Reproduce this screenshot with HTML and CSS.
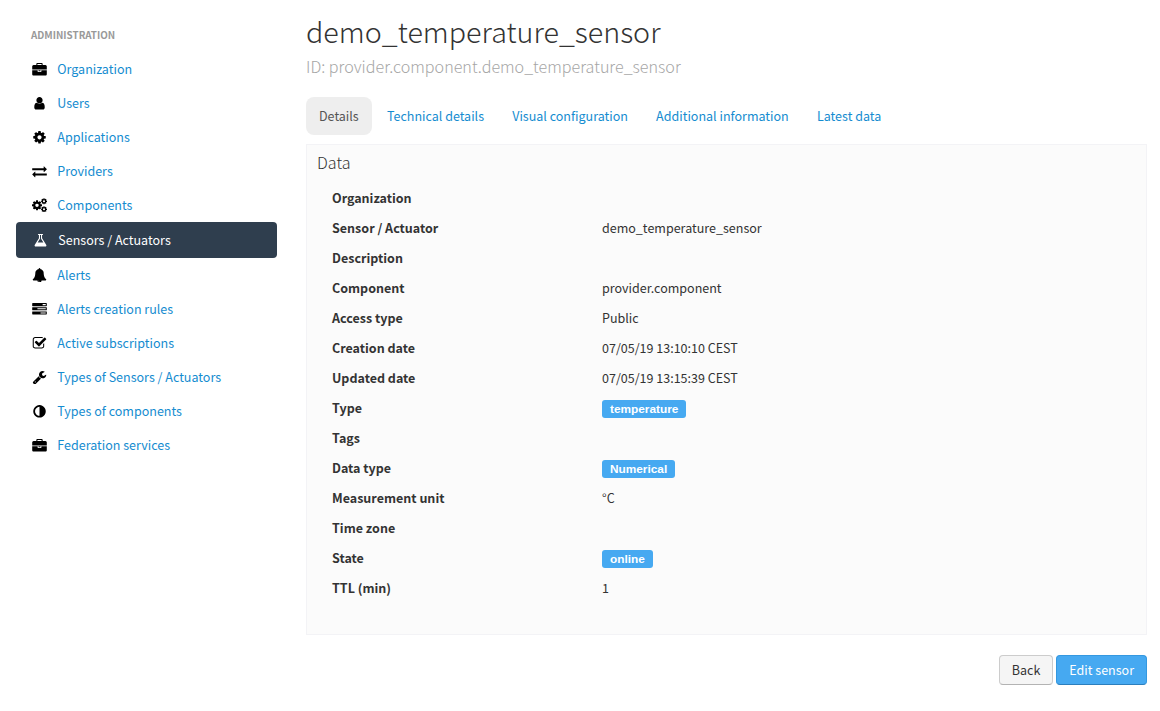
FILE: index.html
```html
<!DOCTYPE html>
<html lang="en">
<head>
<meta charset="utf-8">
<title>demo_temperature_sensor</title>
<link rel="stylesheet" href="styles.css">
</head>
<body>
<svg class="sprite" aria-hidden="true">
  <symbol id="briefcase" viewBox="0 0 1792 1792"><path d="M640 256h512v-128h-512v128zm1152 640v480q0 66-47 113t-113 47h-1472q-66 0-113-47t-47-113v-480h672v160q0 26 19 45t45 19h320q26 0 45-19t19-45v-160h672zm-768 0v128h-256v-128h256zm768-480v384h-1792v-384q0-66 47-113t113-47h352v-160q0-40 28-68t68-28h576q40 0 68 28t28 68v160h352q66 0 113 47t47 113z"/></symbol>
  <symbol id="user" viewBox="0 0 1792 1792"><path d="M1536 1399q0 109-62.500 187t-150.500 78h-854q-88 0-150.500-78t-62.500-187q0-85 8.500-160.500t31.500-152 58.500-131 94-89 134.500-34.500q131 128 313 128t313-128q76 0 134.500 34.500t94 89 58.500 131 31.500 152 8.500 160.500zm-256-887q0 159-112.500 271.500t-271.500 112.500-271.500-112.500-112.500-271.500 112.500-271.500 271.500-112.500 271.500 112.500 112.500 271.500z"/></symbol>
  <symbol id="cog" viewBox="0 0 1792 1792"><path id="gear" d="M1152 896q0-106-75-181t-181-75-181 75-75 181 75 181 181 75 181-75 75-181zm512-109v222q0 12-8 23t-20 13l-185 28q-19 54-39 91 35 50 107 138 10 12 10 25t-9 23q-27 37-99 108t-94 71q-12 0-26-9l-138-108q-44 23-91 38-16 136-29 186-7 28-36 28h-222q-14 0-24.500-8.500t-11.500-21.500l-28-184q-49-16-90-37l-141 107q-10 9-25 9-14 0-25-11-126-114-165-168-7-10-7-23 0-12 8-23 15-21 51-66.500t54-70.500q-27-50-41-99l-183-27q-13-2-21-12.500t-8-23.500v-222q0-12 8-23t19-13l186-28q14-46 39-92-40-57-107-138-10-12-10-24 0-10 9-23 26-36 98.500-107.500t94.500-71.500q13 0 26 10l138 107q44-23 91-38 16-136 29-186 7-28 36-28h222q14 0 24.500 8.500t11.500 21.500l28 184q49 16 90 37l142-107q9-9 24-9 13 0 25 10 129 119 165 170 7 8 7 22 0 12-8 23-15 21-51 66.500t-54 70.500q26 50 41 98l183 28q13 2 21 12.500t8 23.500z"/></symbol>
  <symbol id="exchange" viewBox="0 0 1792 1792"><path d="M1792 1184v192q0 13-9.500 22.500t-22.500 9.500h-1376v192q0 13-9.500 22.500t-22.500 9.500q-12 0-24-10l-319-320q-9-9-9-22 0-14 9-23l320-320q9-9 23-9 13 0 22.500 9.500t9.500 22.500v192h1376q13 0 22.500 9.500t9.500 22.500zm0-544q0 14-9 23l-320 320q-9 9-23 9-13 0-22.500-9.500t-9.500-22.500v-192h-1376q-13 0-22.500-9.500t-9.500-22.500v-192q0-13 9.500-22.500t22.500-9.500h1376v-192q0-14 9-23t23-9q12 0 24 10l319 319q9 9 9 23z"/></symbol>
  <symbol id="cogs" viewBox="0 0 1920 1792"><use href="#gear" transform="translate(-106.700 149.300) scale(.8333)"/><use href="#gear" transform="translate(1088 -64) scale(.5)"/><use href="#gear" transform="translate(1088 960) scale(.5)"/></symbol>
  <symbol id="flask" viewBox="0 0 1792 1792"><path d="M1591 1448q56 89 21.500 152.500t-140.500 63.500h-1152q-106 0-140.500-63.500t21.500-152.500l503-793v-399h-64q-26 0-45-19t-19-45 19-45 45-19h512q26 0 45 19t19 45-19 45-45 19h-64v399zm-779-725l-272 429h712l-272-429-20-31v-436h-128v436z"/></symbol>
  <symbol id="bell" viewBox="0 0 1792 1792"><path d="M912 1696q0-16-16-16-59 0-101.500-42.500t-42.500-101.500q0-16-16-16t-16 16q0 73 51.500 124.500t124.500 51.500q16 0 16-16zm816-288q0 52-38 90t-90 38h-448q0 106-75 181t-181 75-181-75-75-181h-448q-52 0-90-38t-38-90q50-42 91-88t85-119.500 74.500-158.500 50-206 19.500-260q0-152 117-282.500t307-158.500q-8-19-8-39 0-40 28-68t68-28 68 28 28 68q0 20-8 39 190 28 307 158.500t117 282.500q0 139 19.500 260t50 206 74.500 158.500 85 119.500 91 88z"/></symbol>
  <symbol id="tasks" viewBox="0 0 1792 1792"><path d="M1024 1408h640v-128h-640v128zm-384-512h1024v-128h-1024v128zm640-512h384v-128h-384v128zm512 832v256q0 26-19 45t-45 19h-1664q-26 0-45-19t-19-45v-256q0-26 19-45t45-19h1664q26 0 45 19t19 45zm0-512v256q0 26-19 45t-45 19h-1664q-26 0-45-19t-19-45v-256q0-26 19-45t45-19h1664q26 0 45 19t19 45zm0-512v256q0 26-19 45t-45 19h-1664q-26 0-45-19t-19-45v-256q0-26 19-45t45-19h1664q26 0 45 19t19 45z"/></symbol>
  <symbol id="check" viewBox="0 0 1792 1792"><path d="M1472 930v318q0 119-84.500 203.500t-203.500 84.500h-832q-119 0-203.500-84.500t-84.500-203.500v-832q0-119 84.500-203.500t203.500-84.500h832q63 0 117 25 15 7 18 23 3 17-9 29l-49 49q-10 10-23 10-3 0-9-2-23-6-45-6h-832q-66 0-113 47t-47 113v832q0 66 47 113t113 47h832q66 0 113-47t47-113v-254q0-13 9-22l64-64q10-10 23-10 6 0 12 3 20 8 20 29zm231-489l-814 814q-24 24-57 24t-57-24l-430-430q-24-24-24-57t24-57l110-110q24-24 57-24t57 24l263 263 647-647q24-24 57-24t57 24l110 110q24 24 24 57t-24 57z"/></symbol>
  <symbol id="wrench" viewBox="0 0 1792 1792"><path d="M448 1472q0-26-19-45t-45-19-45 19-19 45 19 45 45 19 45-19 19-45zm644-420l-682 682q-37 37-90 37-52 0-91-37l-106-108q-38-36-38-90 0-53 38-91l681-681q39 98 114.500 173.500t173.500 114.500zm634-435q0 39-23 106-47 134-164.500 217.500t-258.500 83.500q-185 0-316.500-131.500t-131.500-316.500 131.500-316.500 316.500-131.500q58 0 121.500 16.500t107.500 46.500q16 11 16 28t-16 28l-293 169v224l193 107q5-3 79-48.500t135.500-81 70.500-35.500q15 0 23.500 10t8.500 25z"/></symbol>
  <symbol id="adjust" viewBox="0 0 1792 1792"><path d="M896 1440v-1088q-148 0-273 73t-198 198-73 273 73 273 198 198 273 73zm768-544q0 209-103 385.500t-279.500 279.500-385.500 103-385.500-103-279.500-279.500-103-385.500 103-385.500 279.500-279.500 385.500-103 385.500 103 279.500 279.500 103 385.500z"/></symbol>
</svg>
<div class="page">
  <nav class="sidebar">
    <div class="nav-header">ADMINISTRATION</div>
    <a class="nav-item"><svg class="icon low"><use href="#briefcase"/></svg><span>Organization</span></a>
    <a class="nav-item"><svg class="icon"><use href="#user"/></svg><span>Users</span></a>
    <a class="nav-item"><svg class="icon"><use href="#cog"/></svg><span>Applications</span></a>
    <a class="nav-item"><svg class="icon"><use href="#exchange"/></svg><span>Providers</span></a>
    <a class="nav-item"><svg class="icon"><use href="#cogs"/></svg><span>Components</span></a>
    <a class="nav-item active"><svg class="icon"><use href="#flask"/></svg><span>Sensors / Actuators</span></a>
    <a class="nav-item"><svg class="icon"><use href="#bell"/></svg><span>Alerts</span></a>
    <a class="nav-item"><svg class="icon"><use href="#tasks"/></svg><span>Alerts creation rules</span></a>
    <a class="nav-item"><svg class="icon"><use href="#check"/></svg><span>Active subscriptions</span></a>
    <a class="nav-item"><svg class="icon"><use href="#wrench"/></svg><span>Types of Sensors / Actuators</span></a>
    <a class="nav-item"><svg class="icon"><use href="#adjust"/></svg><span>Types of components</span></a>
    <a class="nav-item"><svg class="icon low"><use href="#briefcase"/></svg><span>Federation services</span></a>
  </nav>
  <main class="content">
    <h1 class="title">demo_temperature_sensor</h1>
    <div class="subtitle">ID: provider.component.demo_temperature_sensor</div>
    <div class="tabs">
      <a class="tab selected">Details</a>
      <a class="tab">Technical details</a>
      <a class="tab">Visual configuration</a>
      <a class="tab">Additional information</a>
      <a class="tab">Latest data</a>
    </div>
    <section class="panel">
      <h2 class="panel-title">Data</h2>
      <dl class="fields">
        <dt>Organization</dt><dd></dd>
        <dt>Sensor / Actuator</dt><dd>demo_temperature_sensor</dd>
        <dt>Description</dt><dd></dd>
        <dt>Component</dt><dd>provider.component</dd>
        <dt>Access type</dt><dd>Public</dd>
        <dt>Creation date</dt><dd>07/05/19 13:10:10 CEST</dd>
        <dt>Updated date</dt><dd>07/05/19 13:15:39 CEST</dd>
        <dt>Type</dt><dd><span class="badge">temperature</span></dd>
        <dt>Tags</dt><dd></dd>
        <dt>Data type</dt><dd><span class="badge">Numerical</span></dd>
        <dt>Measurement unit</dt><dd>°C</dd>
        <dt>Time zone</dt><dd></dd>
        <dt>State</dt><dd><span class="badge">online</span></dd>
        <dt>TTL (min)</dt><dd>1</dd>
      </dl>
    </section>
    <div class="actions">
      <button class="btn">Back</button>
      <button class="btn primary">Edit sensor</button>
    </div>
  </main>
</div>
</body>
</html>
```
FILE: styles.css
```css
* { box-sizing: border-box; }
body {
  margin: 0;
  background: #fff;
  color: #333;
  font-family: "Noto Sans CJK JP", "Noto Sans", sans-serif;
  font-size: 12.52px;
  line-height: 20px;
}
.sprite { display: none; }
.page { display: flex; height: 711px; }
.sidebar { width: 277px; padding: 25px 0 0 16px; }
.nav-header {
  height: 27px;
  padding-left: 15px;
  color: #999;
  font-size: 9.85px;
  font-weight: 700;
}
.nav-item {
  display: flex;
  align-items: center;
  gap: 9.9px;
  height: 34px;
  padding-left: 16.4px;
  color: #158cd0;
  white-space: nowrap;
}
.icon { width: 15px; height: 14.6px; fill: #000; }
.icon.low { margin-top: 2px; }
.nav-item.active {
  height: 36px;
  padding-left: 17.4px;
  border-radius: 4px;
  background: #2f3e4e;
  color: #fff;
}
.active .icon { fill: #fff; }
.content { width: 841px; margin-left: 29px; padding-top: 11px; }
.title { margin: 0; font-size: 28.7px; font-weight: 300; line-height: 40px; white-space: nowrap; }
.subtitle { margin-top: 5px; color: #a6a6a6; font-size: 16.13px; font-weight: 300; }
.tabs { display: flex; gap: 2.2px; margin-top: 21px; }
.tab { height: 38px; padding: 9px 13px; border-radius: 8px; color: #158cd0; white-space: nowrap; }
.tab.selected { background: #eee; color: #555; }
.panel {
  height: 491px;
  margin-top: 9px;
  padding: 7px 10px;
  border: 1px solid #f3f3f6;
  background: #fbfbfb;
}
.panel-title { margin: 0; font-size: 16.1px; font-weight: 300; line-height: 20px; }
.fields {
  display: grid;
  grid-template-columns: 270px 1fr;
  grid-auto-rows: 30px;
  margin: 11px 0 0 15px;
  line-height: 30px;
}
.fields dt { font-weight: 700; }
.fields dd { display: flex; align-items: center; margin: 0; }
.badge {
  height: 18px;
  margin-top: 2px;
  padding: 0 8px;
  border-radius: 3px;
  background: #46a9f1;
  color: #fff;
  font: bold 11.844px/18px "Liberation Sans", Arial, sans-serif;
}
.actions { display: flex; justify-content: flex-end; gap: 3px; margin-top: 20px; }
.btn {
  height: 30px;
  padding: 0 12px;
  border: 1px solid #ccc;
  border-bottom-color: #b3b3b3;
  border-radius: 4px;
  background: #f5f5f5;
  color: #333;
  font: inherit;
}
.btn.primary { border-color: #3498e0; border-bottom-color: #2c7fbd; background: #46a9f1; color: #fff; }
```
